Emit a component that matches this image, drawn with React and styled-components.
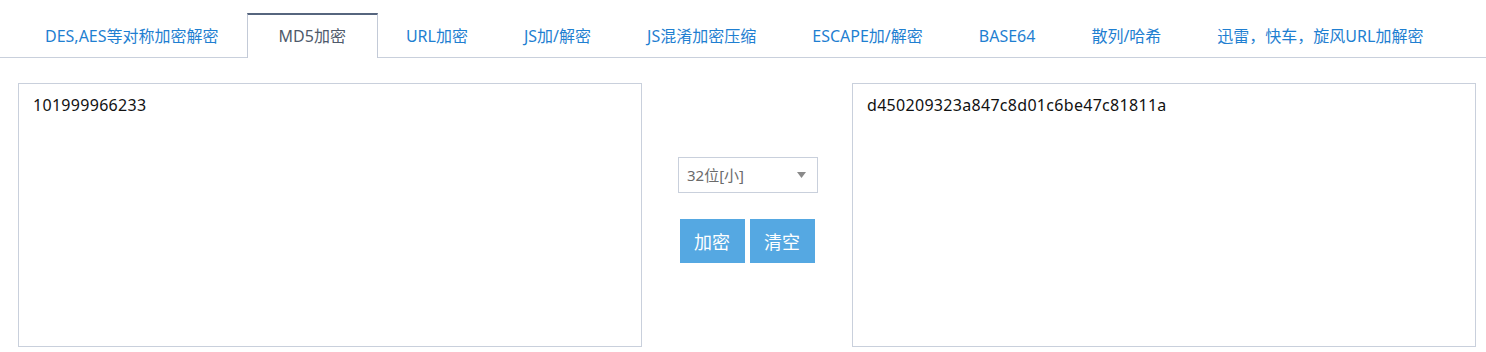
import React from 'react';
import styled, { createGlobalStyle } from 'styled-components';

const GlobalStyle = createGlobalStyle`
  html, body {
    margin: 0;
    padding: 0;
    background: #fff;
  }
  body {
    font-family: "Noto Sans", "Noto Sans CJK SC", sans-serif;
  }
`;

const Page = styled.div`
  width: 1486px;
  height: 352px;
  overflow: hidden;
`;

const TabBar = styled.ul`
  display: flex;
  list-style: none;
  margin: 13px 0 0;
  padding: 0 0 0 17px;
  height: 44px;
  border-bottom: 1px solid #c9d0dc;
`;

const Tab = styled.li`
  box-sizing: border-box;
  height: ${p => (p.$active ? '45px' : '44px')};
  padding: 0 ${p => (p.$active ? '31px' : '27px')};
  font-size: 16px;
  line-height: 42px;
  white-space: nowrap;
  cursor: pointer;
  color: ${p => (p.$active ? '#4f5a6b' : '#1f7fd1')};
  background: #fff;
  border-top: 2px solid ${p => (p.$active ? '#56657e' : 'transparent')};
  border-left: 1px solid ${p => (p.$active ? '#c3cad7' : 'transparent')};
  border-right: 1px solid ${p => (p.$active ? '#c3cad7' : 'transparent')};
`;

const Workspace = styled.div`
  display: flex;
  padding: 25px 10px 0 18px;
`;

const TextBox = styled.textarea`
  box-sizing: border-box;
  width: 624px;
  height: 264px;
  margin: 0;
  padding: 10px 14px;
  border: 1px solid #c9d0dc;
  resize: none;
  outline: none;
  font-family: "Noto Sans", "Noto Sans CJK SC", sans-serif;
  font-size: 16px;
  letter-spacing: 0.3px;
  line-height: 22px;
  color: #111;
  background: #fff;
`;

const Controls = styled.div`
  width: 210px;
  display: flex;
  flex-direction: column;
  align-items: center;
  padding-top: 74px;
  gap: 26px;
`;

const SelectWrap = styled.div`
  position: relative;
  width: 140px;
  height: 36px;
  margin-left: 2px;
`;

const Select = styled.select`
  appearance: none;
  box-sizing: border-box;
  width: 100%;
  height: 100%;
  padding: 0 8px;
  border: 1px solid #c9d0dc;
  border-radius: 0;
  background: #fff;
  color: #6b6b6b;
  font-family: "Noto Sans", "Noto Sans CJK SC", sans-serif;
  font-size: 15px;
  outline: none;
`;

const Caret = styled.svg`
  position: absolute;
  right: 12px;
  top: 15px;
  pointer-events: none;
`;

const ButtonRow = styled.div`
  display: flex;
  gap: 5px;
`;

const Button = styled.button`
  width: 65px;
  height: 44px;
  border: none;
  border-radius: 0;
  background: #55a8e2;
  color: #fff;
  font-family: "Noto Sans CJK SC", sans-serif;
  font-size: 18px;
  cursor: pointer;
  padding: 0;
`;

const tabs = [
  'DES,AES等对称加密解密',
  'MD5加密',
  'URL加密',
  'JS加/解密',
  'JS混淆加密压缩',
  'ESCAPE加/解密',
  'BASE64',
  '散列/哈希',
  '迅雷，快车，旋风URL加解密',
];

export default function App() {
  return (
    <Page>
      <GlobalStyle />
      <TabBar>
        {tabs.map(t => (
          <Tab key={t} $active={t === 'MD5加密'}>{t}</Tab>
        ))}
      </TabBar>
      <Workspace>
        <TextBox defaultValue="101999966233" />
        <Controls>
          <SelectWrap>
            <Select defaultValue="32s">
              <option value="32s">32位[小]</option>
              <option value="32b">32位[大]</option>
              <option value="16s">16位[小]</option>
              <option value="16b">16位[大]</option>
            </Select>
            <Caret width="9" height="6" viewBox="0 0 9 6">
              <path d="M0 0h9L4.5 6z" fill="#8a8a8a" />
            </Caret>
          </SelectWrap>
          <ButtonRow>
            <Button>加密</Button>
            <Button>清空</Button>
          </ButtonRow>
        </Controls>
        <TextBox defaultValue="d450209323a847c8d01c6be47c81811a" />
      </Workspace>
    </Page>
  );
}
